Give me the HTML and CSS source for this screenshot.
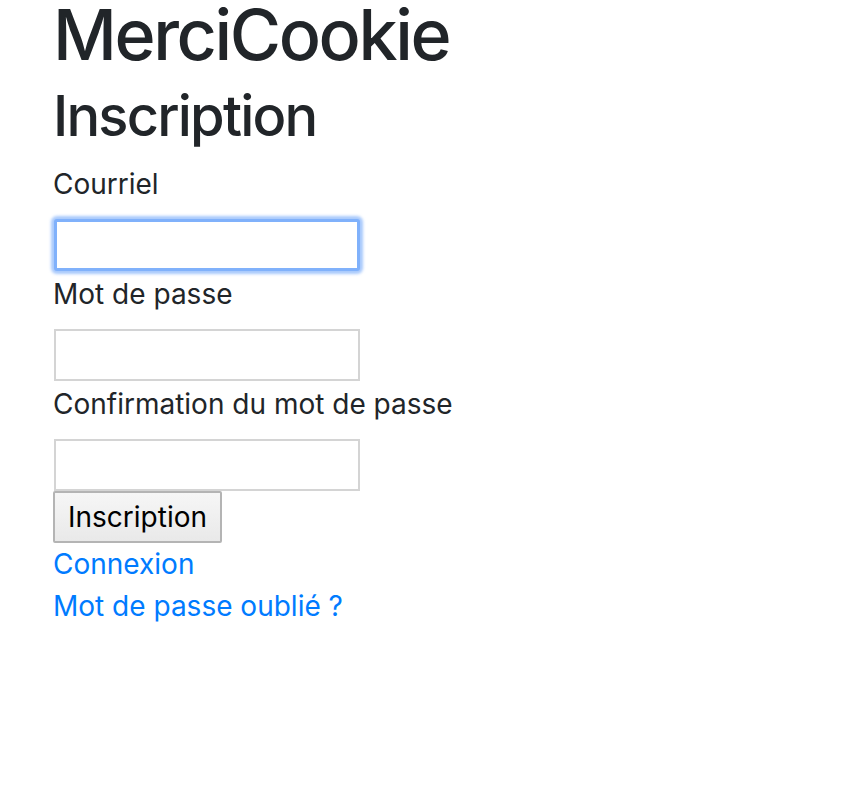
FILE: index.html
```html
<!DOCTYPE html>
<html lang="fr">
<head>
<meta charset="utf-8">
<title>MerciCookie - Inscription</title>
<link rel="stylesheet" href="styles.css">
</head>
<body>
<main class="page">
  <h1 class="brand">MerciCookie</h1>
  <h2 class="title">Inscription</h2>
  <form class="form">
    <label class="field-label" for="email">Courriel</label>
    <input class="field field-focus" id="email" type="email">
    <label class="field-label" for="pw">Mot de passe</label>
    <input class="field" id="pw" type="password">
    <label class="field-label" for="pw2">Confirmation du mot de passe</label>
    <input class="field" id="pw2" type="password">
    <button class="submit" type="button">Inscription</button>
  </form>
  <a class="link" href="#">Connexion</a>
  <a class="link" href="#">Mot de passe oublié ?</a>
</main>
</body>
</html>
```

FILE: styles.css
```css
html, body {
  margin: 0;
  padding: 0;
  background: #ffffff;
}

body {
  font-family: Inter, "Liberation Sans", Arial, sans-serif;
  color: #212529;
  font-size: 28px;
  line-height: 42px;
}

.page {
  padding-left: 53px;
  display: flex;
  flex-direction: column;
  align-items: flex-start;
}

.brand {
  margin: 0 0 10px 0;
  font-size: 70px;
  line-height: 70px;
  font-weight: 500;
  letter-spacing: -2.4px;
  color: #212529;
}

.title {
  margin: 0 0 8px 0;
  font-size: 56px;
  line-height: 73px;
  font-weight: 500;
  letter-spacing: -1.8px;
  color: #212529;
}

.form {
  display: flex;
  flex-direction: column;
  align-items: flex-start;
  margin: 0;
}

.field-label {
  display: block;
  padding-top: 2px;
  margin-bottom: 14px;
  line-height: 42px;
}

.field {
  box-sizing: border-box;
  width: 306px;
  height: 52px;
  margin: 0 0 0 1px;
  border: 2px solid #d4d4d4;
  background: #ffffff;
  font: inherit;
  outline: none;
}

.field-focus {
  border: 3px solid #80b1fb;
  border-radius: 3px;
  box-shadow: 0 0 3px 3px rgba(110, 165, 250, 0.6);
}

.submit {
  box-sizing: border-box;
  height: 52px;
  padding: 0 13px;
  margin: 0;
  border: 2px solid #b4b4b4;
  border-radius: 2px;
  background: linear-gradient(#f6f6f6, #e9e9e9);
  color: #000000;
  font-family: inherit;
  font-size: 28px;
  line-height: 42px;
}

.link {
  display: block;
  color: #007bff;
  text-decoration: none;
  line-height: 42px;
}
```
